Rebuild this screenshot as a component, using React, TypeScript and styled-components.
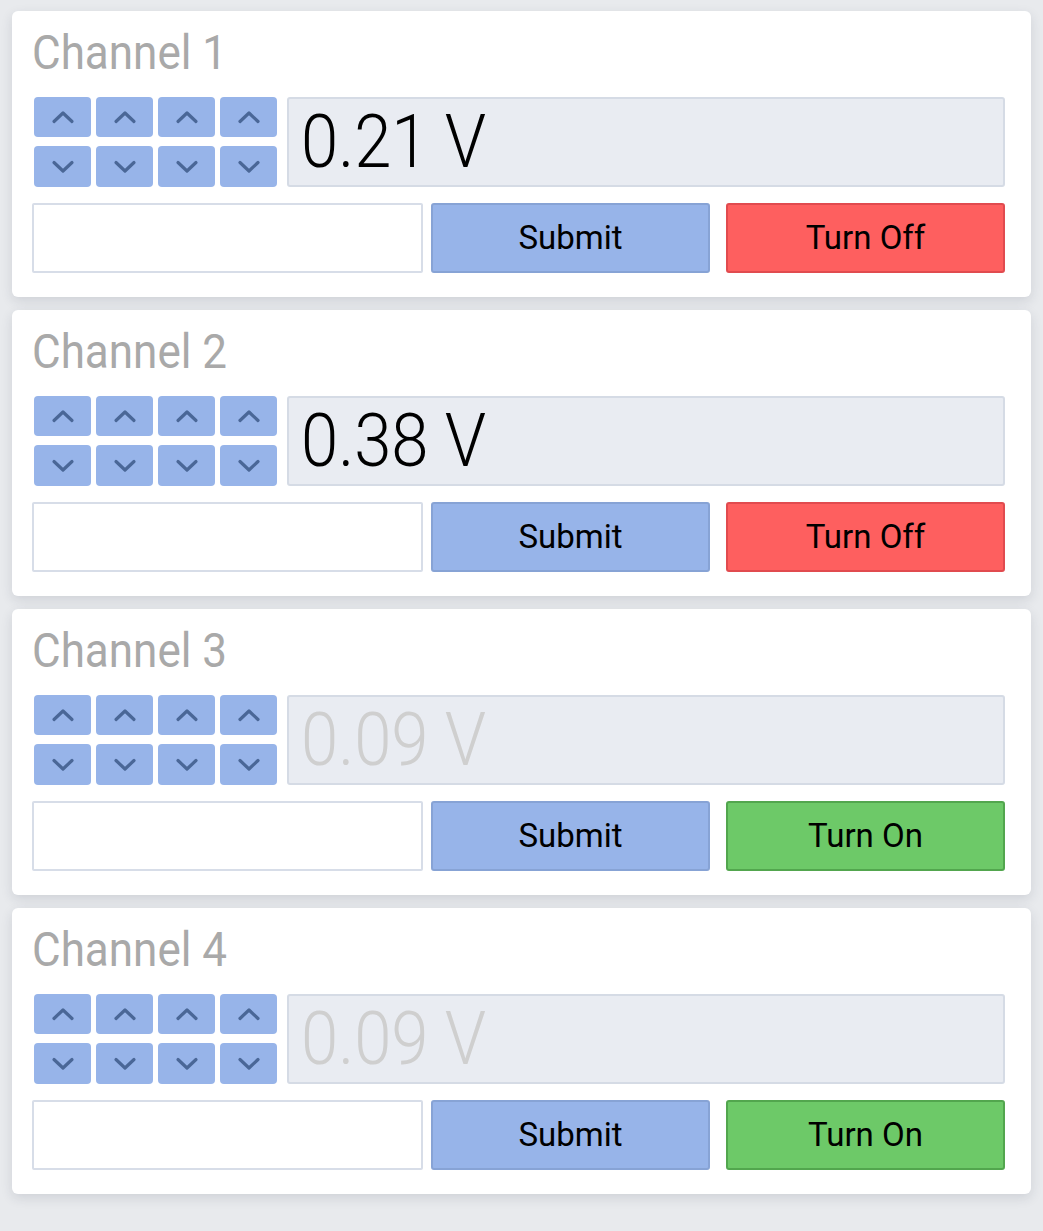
import React from "react";
import styled, { createGlobalStyle } from "styled-components";

const GlobalStyle = createGlobalStyle`
  html, body {
    margin: 0;
    padding: 0;
    background: #e8eaed;
    font-family: Roboto, "Noto Sans", "Liberation Sans", sans-serif;
  }
  * { box-sizing: border-box; }
`;

const Page = styled.div`
  display: flex;
  flex-direction: column;
  gap: 13px;
  padding: 11px 12px 37px 12px;
`;

const Card = styled.section`
  background: #ffffff;
  border-radius: 6px;
  padding: 13px 26px 24px 20px;
  box-shadow: 0 4px 12px rgba(40, 50, 70, 0.13);
  display: flex;
  flex-direction: column;
`;

const Title = styled.h2`
  margin: 0 0 17px 0;
  font-size: 44px;
  line-height: 56px;
  font-weight: 400;
  color: #a9a9a9;
  transform: scaleY(1.1);
  transform-origin: left center;
`;

const ControlRow = styled.div`
  display: flex;
  align-items: stretch;
  gap: 10px;
  height: 90px;
`;

const Steppers = styled.div`
  margin-left: 2px;
  display: grid;
  grid-template-columns: repeat(4, 57px);
  grid-template-rows: 40px 41px;
  column-gap: 5px;
  row-gap: 9px;
`;

const StepButton = styled.button`
  border: none;
  border-radius: 4px;
  background: #97b4e9;
  padding: 0;
  display: flex;
  align-items: center;
  justify-content: center;
  cursor: pointer;
`;

const ChevronIcon = styled.svg`
  display: block;
  width: 26px;
  height: 16px;
  flex: none;
`;

const Display = styled.div<{ $off: boolean }>`
  flex: 1;
  background: #e9ecf2;
  border: 2px solid #d5dbe5;
  border-radius: 3px;
  display: flex;
  align-items: center;
  padding-left: 12px;
  font-size: 67px;
  font-weight: 300;
  color: ${(p) => (p.$off ? "#cfcfcf" : "#000000")};
  overflow: hidden;
`;

const Value = styled.span`
  display: inline-block;
  transform: scaleY(1.1);
  line-height: 1;
`;

const ActionRow = styled.div`
  margin-top: 16px;
  display: flex;
  gap: 8px;
  height: 70px;
`;

const Input = styled.input`
  flex: 1;
  min-width: 0;
  border: 2px solid #d7dde8;
  border-radius: 2px;
  background: #fff;
  font-size: 24px;
  padding: 0 10px;
  outline: none;
`;

const ActionButton = styled.button<{ $bg: string; $border: string }>`
  flex: 0 0 279px;
  background: ${(p) => p.$bg};
  border: 2px solid ${(p) => p.$border};
  border-radius: 3px;
  font-family: Roboto, "Noto Sans", sans-serif;
  font-size: 33px;
  font-weight: 400;
  color: #000;
  cursor: pointer;
  padding: 0 0 2px 0;
`;

const ToggleButton = styled(ActionButton)`
  margin-left: 8px;
`;

const Chevron = ({ up }: { up: boolean }) => (
  <ChevronIcon viewBox="0 0 26 16">
    <polyline
      points={up ? "4,12.5 13,4 22,12.5" : "4,3.5 13,12 22,3.5"}
      fill="none"
      stroke="#4a6797"
      strokeWidth="3.2"
      strokeLinecap="round"
      strokeLinejoin="round"
    />
  </ChevronIcon>
);

type Channel = { name: string; value: string; on: boolean };

const channels: Channel[] = [
  { name: "Channel 1", value: "0.21 V", on: true },
  { name: "Channel 2", value: "0.38 V", on: true },
  { name: "Channel 3", value: "0.09 V", on: false },
  { name: "Channel 4", value: "0.09 V", on: false },
];

const ChannelCard = ({ ch }: { ch: Channel }) => (
  <Card>
    <Title>{ch.name}</Title>
    <ControlRow>
      <Steppers>
        {[0, 1, 2, 3].map((i) => (
          <StepButton key={`u${i}`} aria-label="increase">
            <Chevron up />
          </StepButton>
        ))}
        {[0, 1, 2, 3].map((i) => (
          <StepButton key={`d${i}`} aria-label="decrease">
            <Chevron up={false} />
          </StepButton>
        ))}
      </Steppers>
      <Display $off={!ch.on}>
        <Value>{ch.value}</Value>
      </Display>
    </ControlRow>
    <ActionRow>
      <Input type="text" />
      <ActionButton $bg="#97b4e9" $border="#87a3d5">
        Submit
      </ActionButton>
      {ch.on ? (
        <ToggleButton $bg="#fe5f5f" $border="#e14b4f">
          Turn Off
        </ToggleButton>
      ) : (
        <ToggleButton $bg="#6dc968" $border="#52a64e">
          Turn On
        </ToggleButton>
      )}
    </ActionRow>
  </Card>
);

export default function App() {
  return (
    <>
      <GlobalStyle />
      <Page>
        {channels.map((ch) => (
          <ChannelCard key={ch.name} ch={ch} />
        ))}
      </Page>
    </>
  );
}
